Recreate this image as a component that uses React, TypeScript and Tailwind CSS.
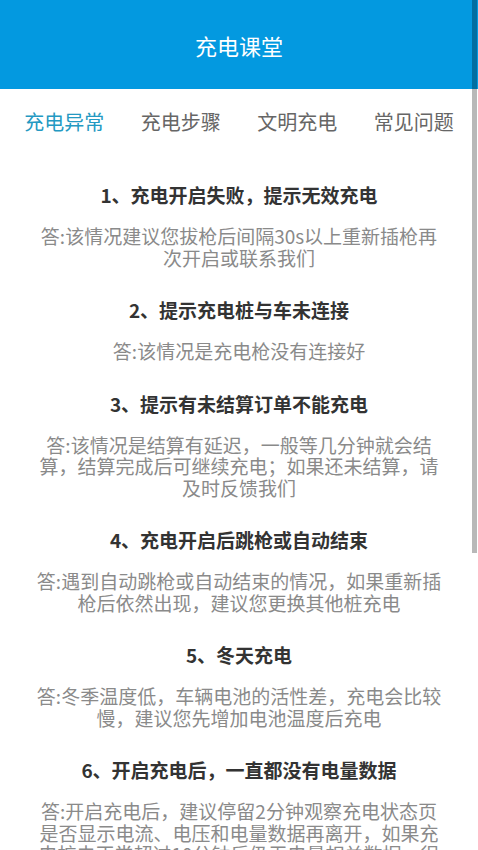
import React from 'react'

const tabs = ['充电异常', '充电步骤', '文明充电', '常见问题']

const faqs = [
  { q: '1、充电开启失败，提示无效充电', a: '答:该情况建议您拔枪后间隔30s以上重新插枪再次开启或联系我们' },
  { q: '2、提示充电桩与车未连接', a: '答:该情况是充电枪没有连接好' },
  { q: '3、提示有未结算订单不能充电', a: '答:该情况是结算有延迟，一般等几分钟就会结算，结算完成后可继续充电；如果还未结算，请及时反馈我们' },
  { q: '4、充电开启后跳枪或自动结束', a: '答:遇到自动跳枪或自动结束的情况，如果重新插枪后依然出现，建议您更换其他桩充电' },
  { q: '5、冬天充电', a: '答:冬季温度低，车辆电池的活性差，充电会比较慢，建议您先增加电池温度后充电' },
  {
    q: '6、开启充电后，一直都没有电量数据',
    a: '答:开启充电后，建议停留2分钟观察充电状态页是否显示电流、电压和电量数据再离开，如果充电桩未正常超过10分钟后仍无电量相关数据，很可能是充电桩故障，请更换其他桩充电',
  },
]

export default function App() {
  return (
    <div
      className="relative h-[850px] w-[478px] overflow-hidden bg-white"
      style={{ fontFamily: '"Noto Sans CJK SC", "Noto Sans", sans-serif' }}
    >
      {/* header */}
      <div className="flex h-[89px] items-center justify-center bg-[#0399e0]">
        <h1 className="text-[22px] leading-none text-white">充电课堂</h1>
      </div>

      {/* tabs */}
      <div className="flex h-[66px] items-center px-[6px]">
        {tabs.map((t, i) => (
          <div
            key={t}
            className={`flex-1 text-center text-[20px] leading-none ${i === 0 ? 'text-[#2499c2]' : 'text-[#666666]'}`}
          >
            {t}
          </div>
        ))}
      </div>

      {/* list */}
      <div className="flex flex-col gap-[31px] pt-[29px]">
        {faqs.map((f) => (
          <div key={f.q} className="flex flex-col items-center gap-[19px]">
            <h3 className="text-center text-[19px] font-bold leading-[22px] text-[#333333]">{f.q}</h3>
            <p className="w-[410px] text-center text-[19px] leading-[21.5px] text-[#8a8a8a]">{f.a}</p>
          </div>
        ))}
      </div>

      {/* scrollbar thumb */}
      <div className="absolute right-[1px] top-0 h-[553px] w-[5px] bg-black/[0.28]" />
    </div>
  )
}
